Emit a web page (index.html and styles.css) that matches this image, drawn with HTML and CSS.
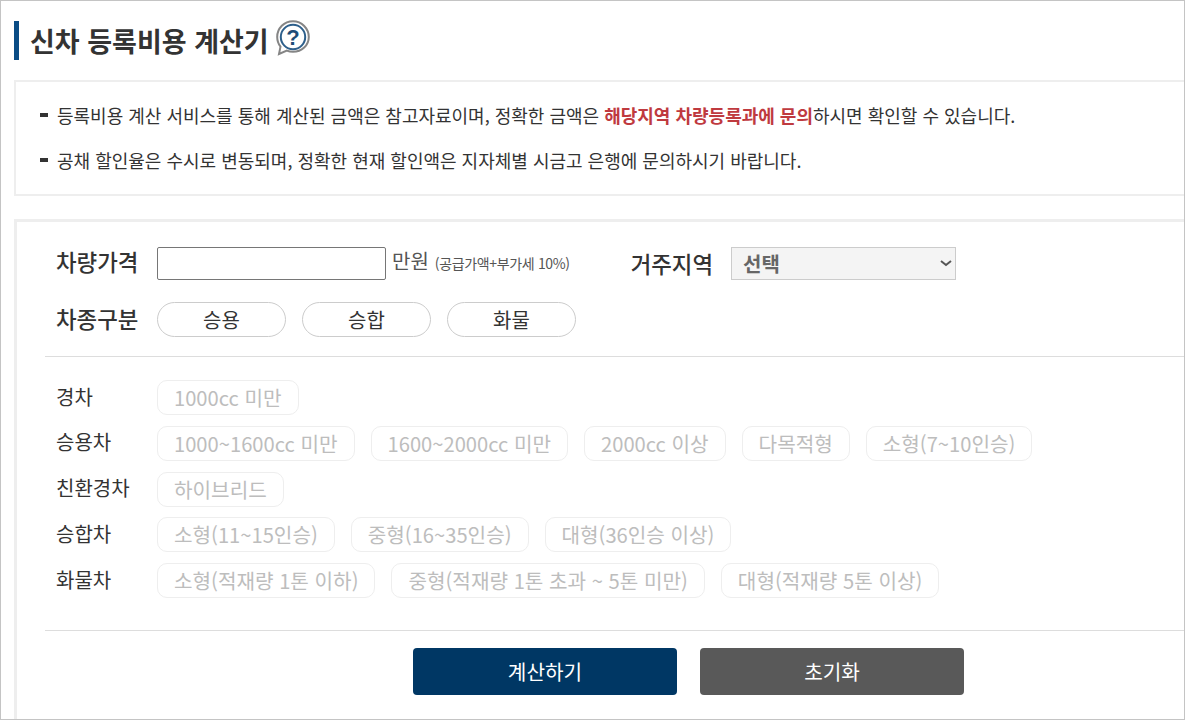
FILE: index.html
```html
<!DOCTYPE html>
<html lang="ko">
<head>
<meta charset="utf-8">
<title>신차 등록비용 계산기</title>
<link rel="stylesheet" href="styles.css">
</head>
<body>
<div class="frame">
  <div class="content">
    <h1 class="title"><span class="title-text">신차 등록비용 계산기</span>
      <svg class="help" width="34" height="36" viewBox="0 0 34 36" aria-hidden="true">
        <path d="M17 1.200C8.200 1.200 1.200 8.200 1.200 17c0 3.600 1.200 7 3.300 9.600L3 34l7.800-3.400c1.900.8 4 1.200 6.200 1.200 8.800 0 15.800-6.400 15.800-14.800S25.800 1.200 17 1.200z" fill="#fff" stroke="#858585" stroke-width="2"/>
        <circle cx="17" cy="17" r="12.200" fill="#fff" stroke="#2d5f8b" stroke-width="2"/>
        <text x="17" y="24.500" class="help-q">?</text>
      </svg>
    </h1>
    <div class="notice">
      <p class="notice-line">등록비용 계산 서비스를 통해 계산된 금액은 참고자료이며, 정확한 금액은 <strong class="red">해당지역 차량등록과에 문의</strong>하시면 확인할 수 있습니다.</p>
      <p class="notice-line">공채 할인율은 수시로 변동되며, 정확한 현재 할인액은 지자체별 시금고 은행에 문의하시기 바랍니다.</p>
    </div>
    <div class="panel">
      <div class="row-price">
        <span class="label">차량가격</span>
        <input class="price" type="text" aria-label="차량가격">
        <span class="unit">만원</span>
        <span class="hint">(공급가액+부가세 10%)</span>
        <span class="label region">거주지역</span>
        <select class="region-select" aria-label="거주지역"><option>선택</option></select>
      </div>
      <div class="row-type">
        <span class="label">차종구분</span>
        <button class="pill">승용</button>
        <button class="pill">승합</button>
        <button class="pill">화물</button>
      </div>
      <div class="classes">
        <div class="class-row"><span class="class-name">경차</span><span class="opt">1000cc 미만</span></div>
        <div class="class-row"><span class="class-name">승용차</span><span class="opt">1000~1600cc 미만</span><span class="opt">1600~2000cc 미만</span><span class="opt">2000cc 이상</span><span class="opt">다목적형</span><span class="opt">소형(7~10인승)</span></div>
        <div class="class-row"><span class="class-name">친환경차</span><span class="opt">하이브리드</span></div>
        <div class="class-row"><span class="class-name">승합차</span><span class="opt">소형(11~15인승)</span><span class="opt">중형(16~35인승)</span><span class="opt">대형(36인승 이상)</span></div>
        <div class="class-row"><span class="class-name">화물차</span><span class="opt">소형(적재량 1톤 이하)</span><span class="opt">중형(적재량 1톤 초과 ~ 5톤 미만)</span><span class="opt">대형(적재량 5톤 이상)</span></div>
      </div>
      <div class="actions">
        <button class="action primary">계산하기</button>
        <button class="action secondary">초기화</button>
      </div>
    </div>
  </div>
</div>
</body>
</html>
```
FILE: styles.css
```css
* { box-sizing: border-box; }
html, body { margin: 0; padding: 0; overflow: hidden; }
body { font-family: "Noto Sans CJK KR", "Noto Sans", sans-serif; color: #333; background: #fff; }
.frame { width: 1185px; height: 720px; border: 1px solid #c4c4c4; overflow: hidden; background: #fff; }
.content { width: 1240px; padding-left: 13px; }
.title { display: flex; align-items: center; height: 39px; margin: 20px 0 20px; padding-left: 11px; border-left: 5px solid #0a4c85; font-size: 27px; font-weight: 700; color: #333; line-height: 39px; }
.help { margin-left: 7px; margin-top: -5px; flex: none; }
.help-q { font-family: "Liberation Sans", sans-serif; font-size: 22px; font-weight: 700; fill: #1d4d78; text-anchor: middle; }
.notice { height: 116px; border: 2px solid #eee; padding: 10px 0 0 24px; margin-bottom: 23px; }
.notice-line { position: relative; margin: 0; padding-left: 17px; height: 45px; font-size: 18px; line-height: 46px; color: #333; }
.notice-line::before { content: ""; position: absolute; left: 0; top: 21px; width: 8px; height: 4px; background: #333; }
.red { color: #bf3a3f; font-weight: 700; }
.panel { height: 520px; border: 3px solid #eee; padding: 0 0 0 28px; }
.label { font-size: 22.4px; font-weight: 500; color: #333; width: 112px; flex: none; padding-left: 11px; padding-bottom: 4px; }
.row-price { display: flex; align-items: center; height: 34px; margin-top: 24px; }
.price { width: 229px; height: 33px; border: 1px solid #767676; border-radius: 2px; background: #fff; padding: 0; flex: none; }
.unit { margin-left: 6px; font-size: 20px; color: #555; padding-bottom: 6px; }
.hint { margin-left: 6px; margin-top: -1px; font-size: 14px; color: #555; letter-spacing: -0.35px; }
.region { margin-left: 61px; width: auto; padding-left: 0; padding-bottom: 0; }
.region-select { appearance: none; margin-left: 18px; width: 225px; height: 33px; border: 1px solid #ccc; border-radius: 0; background-color: #f4f4f4; background-image: url("data:image/svg+xml,%3Csvg xmlns='http://www.w3.org/2000/svg' width='12' height='7'%3E%3Cpath d='M1 1l5 4 5-4' fill='none' stroke='%23555' stroke-width='2'/%3E%3C/svg%3E"); background-repeat: no-repeat; background-position: 208px 12px; color: #666; font-family: inherit; font-size: 20px; font-weight: 700; padding: 1px 0 0 11px; }
.row-type { display: flex; align-items: center; height: 35px; margin-top: 22px; padding-bottom: 0; }
.pill { width: 129px; height: 35px; margin-right: 16px; flex: none; border: 1px solid #ccc; border-radius: 18px; background: #fff; color: #333; font-family: inherit; font-size: 20px; padding: 0; }
.classes { border-top: 1px solid #ddd; border-bottom: 1px solid #ddd; margin-top: 19px; height: 275px; padding-top: 23px; }
.class-row { display: flex; align-items: center; height: 35px; margin-bottom: 10.75px; }
.class-name { width: 112px; flex: none; padding-left: 11px; padding-bottom: 3px; font-size: 20px; color: #333; line-height: 33px; }
.opt { height: 35px; margin-right: 16px; padding: 0 16px; flex: none; border: 1px solid #eee; border-radius: 10px; background: #fff; color: #bdbdbd; font-size: 20.17px; line-height: 33px; white-space: nowrap; }
.actions { display: flex; gap: 23px; margin-top: 17px; padding-left: 368px; }
.action { width: 264px; height: 47px; border: 0; border-radius: 4px; color: #fff; font-family: inherit; font-size: 20.2px; padding: 0; font-weight: 400; }
.primary { background: #003764; }
.secondary { background: #595959; }
```
